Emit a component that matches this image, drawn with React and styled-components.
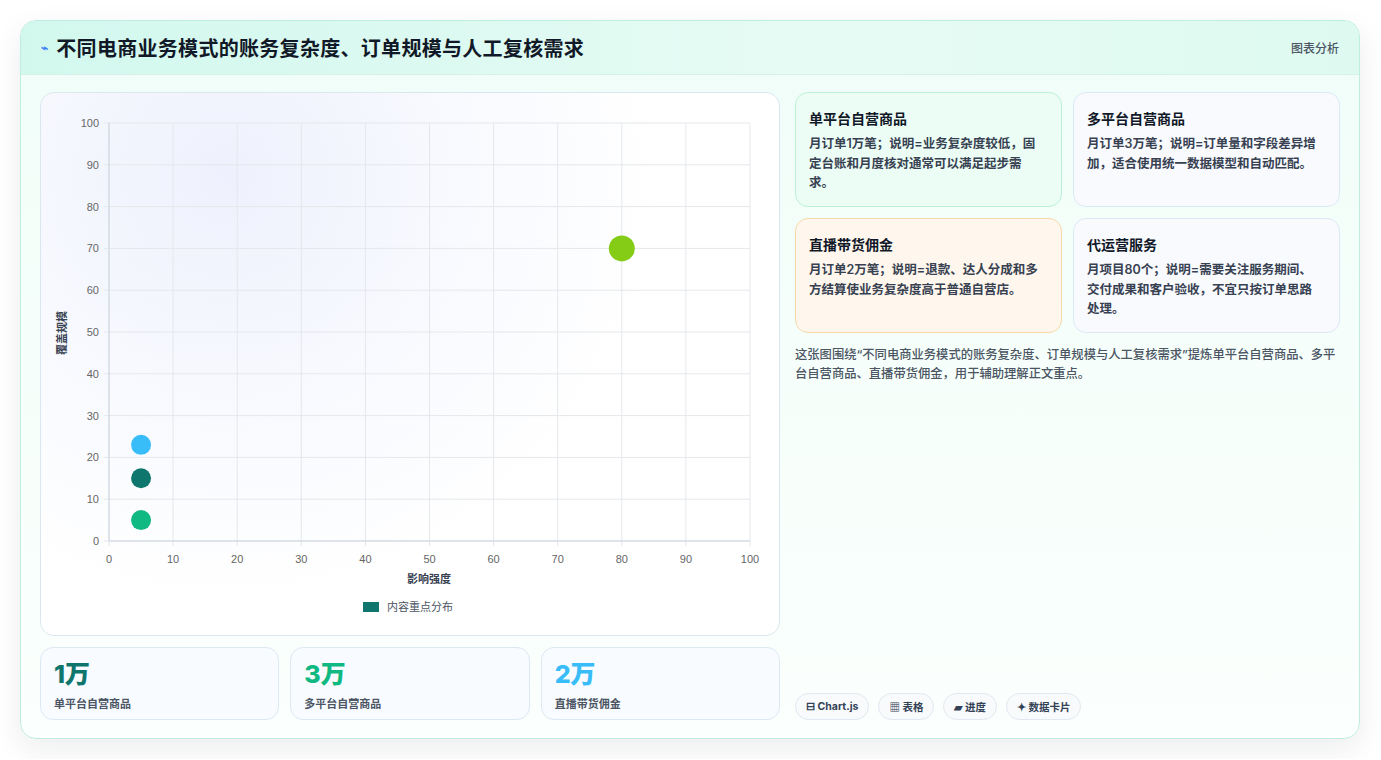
import React from "react";
import styled, { createGlobalStyle } from "styled-components";

const G = createGlobalStyle`
  body{margin:0;background:#fff;font-family:Inter,"Noto Sans CJK SC",sans-serif;}
`;
const Page = styled.div`padding:20px;width:1341px;box-sizing:content-box;`;
const Frame = styled.div`
  width:1340px;height:719px;box-sizing:border-box;border:1px solid #bfeee0;border-radius:16px;
  background:linear-gradient(180deg,#f0fdf8 0%,#f7fffb 60%,#fbfffd 100%);overflow:hidden;
  box-shadow:0 10px 30px rgba(15,23,42,0.08);display:flex;flex-direction:column;`;
const Header = styled.div`
  height:55px;box-sizing:border-box;border-bottom:1px solid #d5f1ea;display:flex;align-items:center;
  justify-content:space-between;padding:0 20px 0 20px;background:linear-gradient(90deg,#d2f8ee,#e6fbf4 60%,#defaf0);`;
const Title = styled.h1`margin:0;font-size:20px;font-weight:700;color:#111827;display:flex;align-items:center;gap:8px;letter-spacing:0.3px;`;
const Icon = styled.span`color:#3b82f6;font-size:12px;`;
const Tag = styled.span`font-size:12px;color:#4b5563;font-weight:500;`;
const Body = styled.div`flex:1;display:flex;gap:15px;padding:17px 19px 18px 19px;`;
const Left = styled.div`width:740px;display:flex;flex-direction:column;gap:11px;`;
const ChartCard = styled.div`
  height:544px;box-sizing:border-box;border:1px solid #dbe7ee;border-radius:14px;
  background:radial-gradient(circle at 25% 15%,#eef1fd 0%,#f7f9fe 30%,#ffffff 60%);overflow:hidden;`;
const Stats = styled.div`display:grid;grid-template-columns:repeat(3,1fr);gap:11px;`;
const Stat = styled.div`
  height:73px;box-sizing:border-box;border:1px solid #dde8f3;border-radius:13px;background:#f8fbff;
  padding:12px 13px;display:flex;flex-direction:column;`;
const StatNum = styled.div`font-size:25px;font-weight:800;color:${p=>p.c};line-height:28px;`;
const StatLabel = styled.div`font-size:11px;color:#4b5563;font-weight:600;margin-top:7px;`;
const Right = styled.div`flex:1;display:flex;flex-direction:column;`;
const Grid = styled.div`display:grid;grid-template-columns:1fr 1fr;gap:11px;`;
const Card = styled.div`
  height:115px;box-sizing:border-box;border:1px solid ${p=>p.b};background:${p=>p.bg};border-radius:13px;padding:15px 13px;`;
const CardTitle = styled.div`font-size:14px;font-weight:700;color:#111827;margin-bottom:6px;`;
const CardText = styled.div`font-size:12.5px;font-weight:600;color:#374151;line-height:19.5px;padding-right:6px;`;
const Desc = styled.p`margin:12px 0 0;font-size:12.3px;color:#4b5563;line-height:19px;font-weight:500;`;
const Chips = styled.div`margin-top:auto;display:flex;gap:9px;`;
const Chip = styled.span`
  height:27px;box-sizing:border-box;padding:0 10px;border:1px solid #e2e8f0;border-radius:14px;background:#f8fafc;
  font-size:10.5px;font-weight:700;color:#334155;display:flex;align-items:center;gap:3px;`;

const X0=68,X1=709,Y0=30,Y1=448;
const px=v=>X0+(X1-X0)*v/100, py=v=>Y1-(Y1-Y0)*v/100;
const ticks=[0,10,20,30,40,50,60,70,80,90,100];
const pts=[[5,23,"#38bdf8",10],[5,15,"#0f766e",10],[5,5,"#10b981",10],[80,70,"#84cc16",13]];

function Chart(){
  return (
    <svg width="740" height="544" style={{display:"block"}}>
      {ticks.map(t=>(
        <g key={t}>
          <line x1={px(t)} x2={px(t)} y1={Y0} y2={Y1+5} stroke="#e5e7eb"/>
          <line x1={X0-5} x2={X1} y1={py(t)} y2={py(t)} stroke="#e5e7eb"/>
          <text x={px(t)} y={470} fontSize="11" fill="#666" textAnchor="middle" fontFamily="Liberation Sans">{t}</text>
          <text x={X0-10} y={py(t)+4} fontSize="11" fill="#666" textAnchor="end" fontFamily="Liberation Sans">{t}</text>
        </g>
      ))}
      <line x1={X0} x2={X1} y1={Y1} y2={Y1} stroke="#cbd5e1"/>
      <line x1={X0} x2={X0} y1={Y0} y2={Y1} stroke="#cbd5e1"/>
      {pts.map(([x,y,c,r],i)=><circle key={i} cx={px(x)} cy={py(y)} r={r} fill={c}/>)}
      <text x={388} y={490} fontSize="11" fontWeight="700" fill="#374151" textAnchor="middle">影响强度</text>
      <text transform="translate(25,240) rotate(-90)" fontSize="11" fontWeight="700" fill="#374151" textAnchor="middle">覆盖规模</text>
      <rect x={322} y={509} width={16} height={10} fill="#0f766e"/>
      <text x={346} y={518} fontSize="11" fill="#4b5563">内容重点分布</text>
    </svg>
  );
}

export default function App(){
  return (
    <Page><G/>
      <Frame>
        <Header>
          <Title><Icon>⌁</Icon>不同电商业务模式的账务复杂度、订单规模与人工复核需求</Title>
          <Tag>图表分析</Tag>
        </Header>
        <Body>
          <Left>
            <ChartCard><Chart/></ChartCard>
            <Stats>
              <Stat><StatNum c="#0f766e">1万</StatNum><StatLabel>单平台自营商品</StatLabel></Stat>
              <Stat><StatNum c="#10b981">3万</StatNum><StatLabel>多平台自营商品</StatLabel></Stat>
              <Stat><StatNum c="#38bdf8">2万</StatNum><StatLabel>直播带货佣金</StatLabel></Stat>
            </Stats>
          </Left>
          <Right>
            <Grid>
              <Card b="#bbf0d6" bg="#ecfdf5"><CardTitle>单平台自营商品</CardTitle><CardText>月订单1万笔；说明=业务复杂度较低，固定台账和月度核对通常可以满足起步需求。</CardText></Card>
              <Card b="#dde8f5" bg="#f8fafe"><CardTitle>多平台自营商品</CardTitle><CardText>月订单3万笔；说明=订单量和字段差异增加，适合使用统一数据模型和自动匹配。</CardText></Card>
              <Card b="#f6d9a8" bg="#fff7ed"><CardTitle>直播带货佣金</CardTitle><CardText>月订单2万笔；说明=退款、达人分成和多方结算使业务复杂度高于普通自营店。</CardText></Card>
              <Card b="#dde8f5" bg="#f8fafe"><CardTitle>代运营服务</CardTitle><CardText>月项目80个；说明=需要关注服务期间、交付成果和客户验收，不宜只按订单思路处理。</CardText></Card>
            </Grid>
            <Desc>这张图围绕“不同电商业务模式的账务复杂度、订单规模与人工复核需求”提炼单平台自营商品、多平台自营商品、直播带货佣金，用于辅助理解正文重点。</Desc>
            <Chips>
              <Chip>⊟ Chart.js</Chip><Chip>▦ 表格</Chip><Chip>▰ 进度</Chip><Chip>✦ 数据卡片</Chip>
            </Chips>
          </Right>
        </Body>
      </Frame>
    </Page>
  );
}
